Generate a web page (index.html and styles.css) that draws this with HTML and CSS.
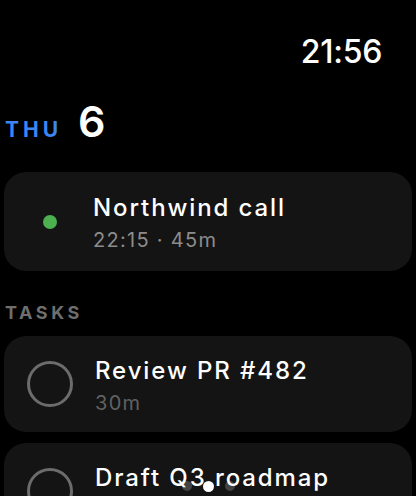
FILE: index.html
```html
<!DOCTYPE html>
<html lang="en">
<head>
    <meta charset="UTF-8">
    <meta name="viewport" content="width=device-width, initial-scale=1.0">
    <title>Today</title>
    <link rel="stylesheet" href="styles.css">
</head>
<body>
    <div class="watch">
        <header class="status">21:56</header>

        <div class="day">
            <span class="weekday">THU</span>
            <span class="date">6</span>
        </div>

        <section class="card event">
            <span class="dot"></span>
            <div class="text">
                <p class="title">Northwind call</p>
                <p class="meta">22:15 · 45m</p>
            </div>
        </section>

        <h2 class="label">TASKS</h2>

        <section class="card task">
            <span class="check"></span>
            <div class="text">
                <p class="title">Review PR #482</p>
                <p class="meta dim">30m</p>
            </div>
        </section>

        <section class="card task">
            <span class="check"></span>
            <div class="text">
                <p class="title">Draft Q3 roadmap</p>
                <p class="meta dim">1h</p>
            </div>
        </section>

        <nav class="pager">
            <span></span>
            <span class="on"></span>
            <span></span>
        </nav>
    </div>
</body>
</html>
```

FILE: styles.css
```css
:root {
    --bg: #000;
    --card: #141414;
    --text: #fff;
    --muted: #8c8c8c;
    --dim: #616161;
    --label: #6e6e6e;
    --blue: #3b86f4;
    --green: #4caf50;
}

* {
    box-sizing: border-box;
    margin: 0;
    padding: 0;
}

html, body {
    background: var(--bg);
    color: var(--text);
    font-family: Inter, "Noto Sans", sans-serif;
    height: 100%;
    overflow: hidden;
}

.watch {
    position: relative;
    height: 100%;
}

.status {
    padding: 33px 34px 0 0;
    text-align: right;
    font-size: 32px;
    line-height: 38px;
    font-weight: 500;
    letter-spacing: -0.3px;
}

.day {
    display: flex;
    align-items: baseline;
    gap: 16px;
    margin-top: 25px;
    padding-left: 5px;
    height: 50px;
}

.weekday {
    color: var(--blue);
    font-size: 21px;
    line-height: 1;
    font-weight: 700;
    letter-spacing: 4px;
}

.date {
    font-size: 43px;
    line-height: 50px;
    font-weight: 600;
}

.card {
    display: flex;
    align-items: center;
    margin: 0 4px;
    background: var(--card);
    border-radius: 22px;
}

.event {
    height: 99px;
    margin-top: 26px;
    padding-left: 39px;
}

.dot {
    width: 14px;
    height: 14px;
    border-radius: 50%;
    background: var(--green);
    margin-right: 36px;
    flex-shrink: 0;
}

.text {
    padding-top: 4px;
}

.title {
    font-size: 24px;
    line-height: 28px;
    font-weight: 500;
    letter-spacing: 1.9px;
}

.meta {
    margin-top: 5px;
    font-size: 20px;
    line-height: 26px;
    color: var(--muted);
    letter-spacing: 1.3px;
}

.meta.dim { color: var(--dim); }

.label {
    margin: 31px 0 12px 5px;
    font-size: 18px;
    line-height: 22px;
    font-weight: 700;
    letter-spacing: 3.6px;
    color: var(--label);
}

.task {
    height: 96px;
    padding-left: 23px;
    margin-bottom: 11px;
}

.check {
    width: 46px;
    height: 46px;
    border: 3px solid #6c6c6c;
    border-radius: 50%;
    margin-right: 22px;
    flex-shrink: 0;
}

.pager {
    position: absolute;
    left: 0;
    right: 0;
    top: 480px;
    display: flex;
    justify-content: center;
    align-items: center;
    gap: 11px;
    height: 12px;
}

.pager span {
    width: 10px;
    height: 10px;
    border-radius: 50%;
    background: rgba(255, 255, 255, 0.2);
}

.pager .on {
    width: 11px;
    height: 11px;
    background: #fff;
}
```
